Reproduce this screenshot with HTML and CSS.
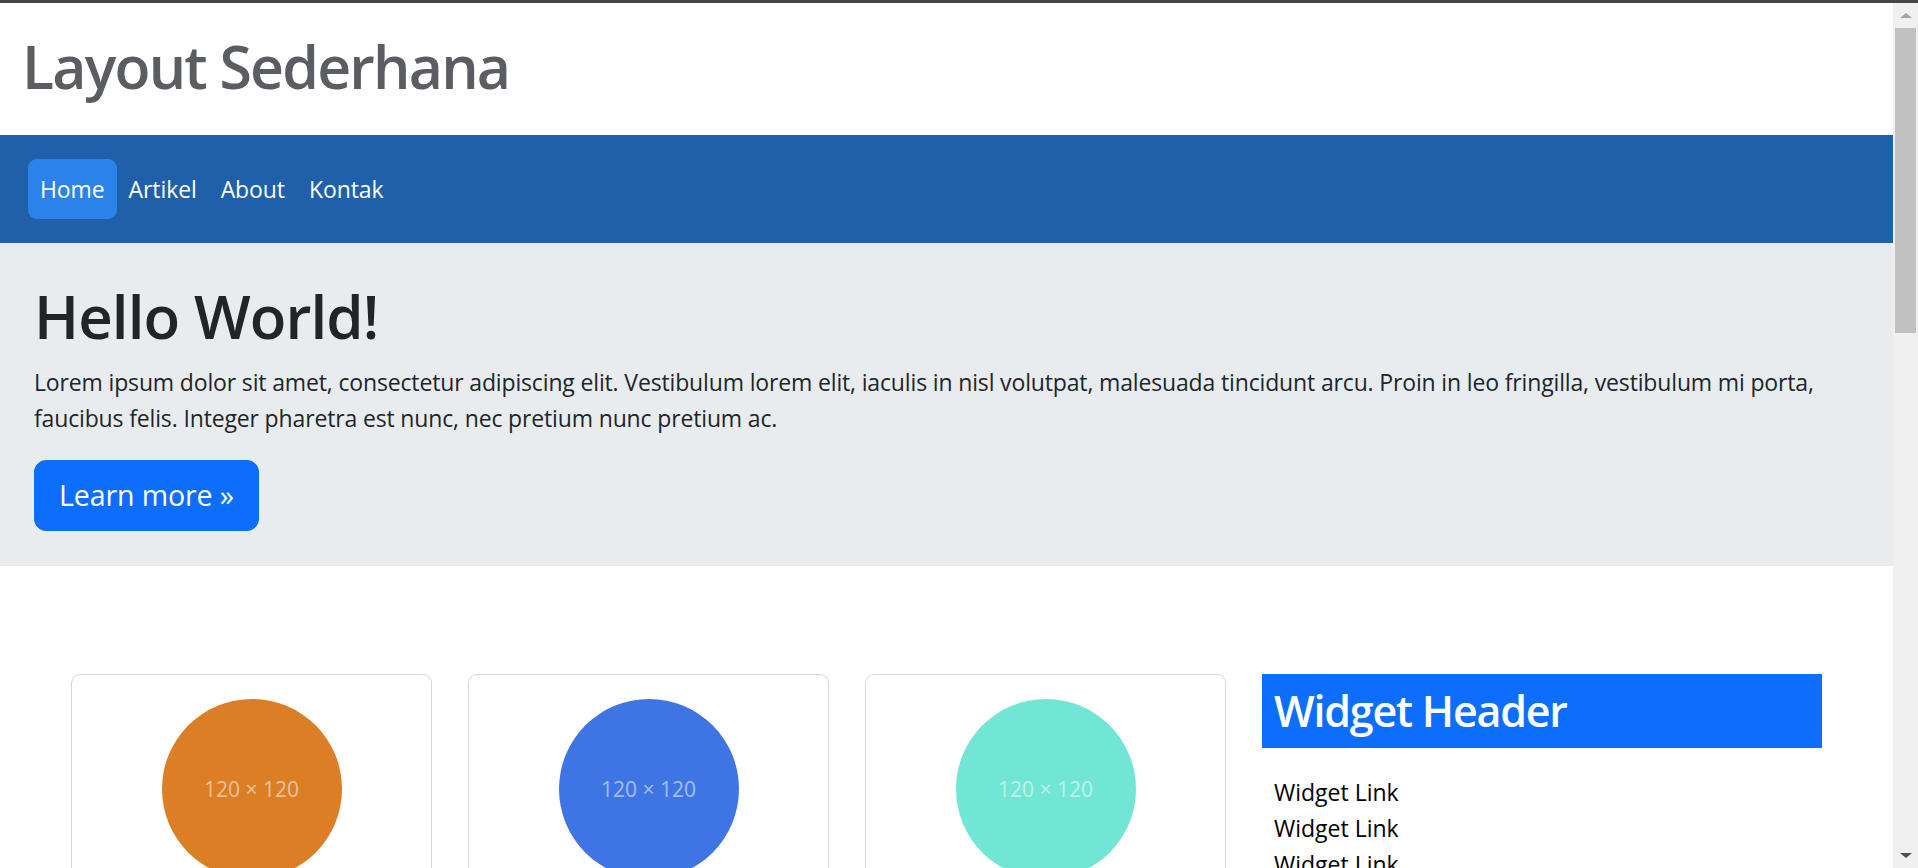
FILE: index.html
```html
<!DOCTYPE html>
<html lang="id">
<head>
<meta charset="utf-8">
<title>Layout Sederhana</title>
<link rel="stylesheet" href="styles.css">
</head>
<body>
<div class="topline"></div>
<div class="window">
  <div class="page">
    <header class="site-header">
      <h1 class="site-title">Layout Sederhana</h1>
    </header>
    <nav class="navbar">
      <ul class="nav">
        <li><a class="nav-link active" href="#">Home</a></li>
        <li><a class="nav-link" href="#">Artikel</a></li>
        <li><a class="nav-link" href="#">About</a></li>
        <li><a class="nav-link" href="#">Kontak</a></li>
      </ul>
    </nav>
    <section class="hero">
      <h1 class="hero-title">Hello World!</h1>
      <p class="hero-text">Lorem ipsum dolor sit amet, consectetur adipiscing elit. Vestibulum lorem elit, iaculis in nisl volutpat, malesuada tincidunt arcu. Proin in leo fringilla, vestibulum mi porta, faucibus felis. Integer pharetra est nunc, nec pretium nunc pretium ac.</p>
      <a class="btn-lg" href="#">Learn more »</a>
    </section>
    <main class="content">
      <div class="card">
        <div class="thumb thumb-orange"><span>120 × 120</span></div>
      </div>
      <div class="card">
        <div class="thumb thumb-blue"><span>120 × 120</span></div>
      </div>
      <div class="card">
        <div class="thumb thumb-teal"><span>120 × 120</span></div>
      </div>
      <aside class="widget">
        <h2 class="widget-header">Widget Header</h2>
        <ul class="widget-links">
          <li><a href="#">Widget Link</a></li>
          <li><a href="#">Widget Link</a></li>
          <li><a href="#">Widget Link</a></li>
          <li><a href="#">Widget Link</a></li>
        </ul>
      </aside>
    </main>
  </div>
  <div class="scrollbar">
    <div class="sb-arrow sb-up"></div>
    <div class="sb-track"><div class="sb-thumb"></div></div>
    <div class="sb-arrow sb-down"></div>
  </div>
</div>
</body>
</html>
```
FILE: styles.css
```css
* { box-sizing: border-box; }
html, body {
  margin: 0;
  padding: 0;
  height: 868px;
  overflow: hidden;
  background: #fff;
  font-family: "Open Sans", "Noto Sans", "Liberation Sans", sans-serif;
  color: #212529;
}
.topline {
  height: 3px;
  background: #454545;
}
.window {
  display: flex;
  height: 865px;
}
.page {
  flex: 1;
  min-width: 0;
  overflow: hidden;
}
.site-header {
  height: 132px;
  padding: 27px 22px 0;
}
.site-title {
  margin: 0;
  font-size: 59px;
  line-height: 72px;
  font-weight: 600;
  letter-spacing: -1.8px;
  color: #5a5d61;
}
.navbar {
  background: #2060aa;
  padding: 24px 28px;
}
.nav {
  list-style: none;
  margin: 0;
  padding: 0;
  display: flex;
}
.nav-link {
  display: block;
  padding: 12px 12px;
  font-size: 23px;
  letter-spacing: -0.1px;
  line-height: 36px;
  color: #fff;
  text-decoration: none;
  border-radius: 9px;
}
.nav-link.active {
  background: #2b83ea;
}
.hero {
  background: #e9ecef;
  padding: 37px 34px 35px;
}
.hero-title {
  margin: 0 0 12px;
  font-size: 60px;
  line-height: 72px;
  font-weight: 600;
  letter-spacing: -0.9px;
}
.hero-text {
  margin: 0 0 24px;
  font-size: 23px;
  letter-spacing: -0.15px;
  line-height: 36px;
}
.btn-lg {
  display: inline-block;
  padding: 12px 24px;
  border: 1px solid #0d6efd;
  border-radius: 12px;
  background: #0d6efd;
  color: #fff;
  font-size: 28.5px;
  letter-spacing: -0.1px;
  line-height: 45px;
  text-decoration: none;
}
.content {
  width: 1787px;
  margin: 0 auto;
  padding: 108px 18px 0;
  display: grid;
  grid-template-columns: repeat(3, 1fr) 560px;
  column-gap: 36px;
  align-items: start;
}
.card {
  border: 1px solid #d6d6d6;
  border-radius: 9px;
  padding: 24px;
  height: 400px;
  display: flex;
  justify-content: center;
  align-items: flex-start;
}
.thumb {
  width: 180px;
  height: 180px;
  border-radius: 50%;
  display: flex;
  align-items: center;
  justify-content: center;
}
.thumb span {
  font-size: 21px;
  font-weight: 400;
  white-space: nowrap;
  color: rgba(255, 255, 255, 0.55);
}
.thumb-orange { background: #dc7e25; }
.thumb-blue { background: #3f74e4; }
.thumb-teal { background: #72e6d5; }
.widget-header {
  margin: 0;
  background: #0d6efd;
  color: #fff;
  font-size: 43px;
  line-height: 54px;
  font-weight: 600;
  letter-spacing: -1.2px;
  padding: 10px 12px;
}
.widget-links {
  list-style: none;
  margin: 0;
  padding: 26px 12px 0;
}
.widget-links li {
  font-size: 23px;
  letter-spacing: 0;
  line-height: 36px;
}
.widget-links a {
  color: #000;
  text-decoration: none;
}
.scrollbar {
  width: 25px;
  background: #f0f0f0;
  display: flex;
  flex-direction: column;
}
.sb-arrow {
  height: 25px;
  display: flex;
  justify-content: center;
  align-items: center;
}
.sb-up::before {
  content: "";
  border-left: 6px solid transparent;
  border-right: 6px solid transparent;
  border-bottom: 5px solid #a3a3a3;
}
.sb-down::before {
  content: "";
  border-left: 6px solid transparent;
  border-right: 6px solid transparent;
  border-top: 5px solid #505050;
}
.sb-track {
  flex: 1;
  padding: 0 2px;
}
.sb-thumb {
  height: 305px;
  background: #c1c1c1;
}
```
